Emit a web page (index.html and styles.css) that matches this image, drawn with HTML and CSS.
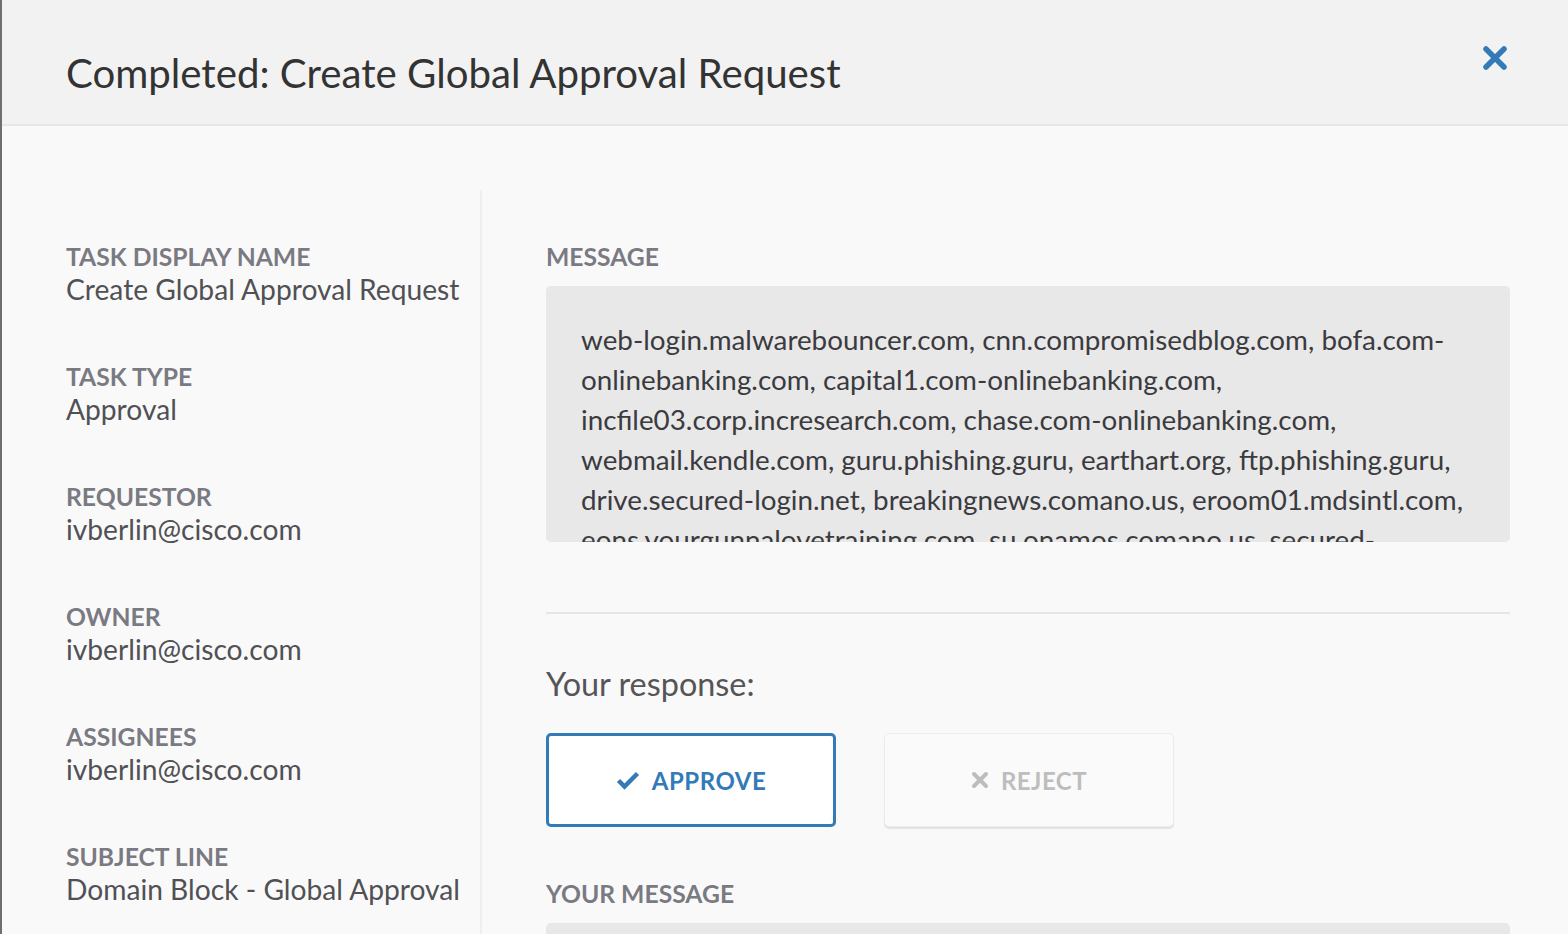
FILE: index.html
```html
<!DOCTYPE html>
<html lang="en">
<head>
<meta charset="utf-8">
<title>Completed: Create Global Approval Request</title>
<link rel="stylesheet" href="styles.css">
</head>
<body>
<div class="page">
  <div class="edge"></div>
  <div class="modal">
    <header class="header">
      <h1 class="title">Completed: Create Global Approval Request</h1>
      <button class="close" aria-label="Close">
        <svg width="26" height="26" viewBox="0 0 26 26"><path d="M4 4 L22 22 M22 4 L4 22" stroke="#337ab7" stroke-width="5.5" stroke-linecap="round"/></svg>
      </button>
    </header>
    <div class="body">
      <aside class="details">
        <div class="field">
          <div class="label">Task Display Name</div>
          <div class="value">Create Global Approval Request</div>
        </div>
        <div class="field">
          <div class="label">Task Type</div>
          <div class="value">Approval</div>
        </div>
        <div class="field">
          <div class="label">Requestor</div>
          <div class="value">ivberlin@cisco.com</div>
        </div>
        <div class="field">
          <div class="label">Owner</div>
          <div class="value">ivberlin@cisco.com</div>
        </div>
        <div class="field">
          <div class="label">Assignees</div>
          <div class="value">ivberlin@cisco.com</div>
        </div>
        <div class="field">
          <div class="label">Subject Line</div>
          <div class="value">Domain Block - Global Approval</div>
        </div>
      </aside>
      <main class="main">
        <div class="label">Message</div>
        <div class="message">web-login.malwarebouncer.com, cnn.compromisedblog.com, bofa.com-onlinebanking.com, capital1.com-onlinebanking.com, incfile03.corp.incresearch.com, chase.com-onlinebanking.com, webmail.kendle.com, guru.phishing.guru, earthart.org, ftp.phishing.guru, drive.secured-login.net, breakingnews.comano.us, eroom01.mdsintl.com, eons.yourgunnalovetraining.com, su.onamos.comano.us, secured-login.net, mail.phishing.guru, login.comano.us</div>
        <hr class="divider">
        <div class="response-title">Your response:</div>
        <div class="buttons">
          <button class="btn btn-approve">
            <svg width="24" height="20" viewBox="0 0 24 20"><path d="M2.5 10.5 L8.5 16.5 L21.5 3.5" fill="none" stroke="#337ab7" stroke-width="4.5" stroke-linejoin="miter"/></svg>
            <span>Approve</span>
          </button>
          <button class="btn btn-reject">
            <svg width="18" height="18" viewBox="0 0 18 18"><path d="M3 3 L15 15 M15 3 L3 15" stroke="#bdbdbd" stroke-width="4" stroke-linecap="round"/></svg>
            <span>Reject</span>
          </button>
        </div>
        <div class="label your-message">Your Message</div>
        <div class="message-input"></div>
      </main>
    </div>
  </div>
</div>
</body>
</html>
```

FILE: styles.css
```css
* { box-sizing: border-box; }
html, body {
  margin: 0;
  height: 100%;
  overflow: hidden;
}
body {
  font-family: Lato, "Open Sans", sans-serif;
  background: #f9f9f9;
  color: #4f4f55;
}
.page {
  display: flex;
  height: 100%;
}
.edge {
  width: 2px;
  flex: none;
  background: #6f6f6f;
}
.modal {
  flex: 1;
  display: flex;
  flex-direction: column;
  min-width: 0;
}
.header {
  height: 126px;
  flex: none;
  background: #f2f2f2;
  border-bottom: 2px solid #e6e6e6;
  display: flex;
  justify-content: space-between;
  align-items: flex-start;
  padding: 0 60px 0 64px;
}
.title {
  margin: 49px 0 0 0;
  font-size: 40.2px;
  line-height: 48px;
  font-weight: 400;
  color: #333333;
}
.close {
  margin-top: 45px;
  background: none;
  border: none;
  padding: 0;
  width: 26px;
  height: 26px;
  cursor: pointer;
}
.body {
  display: flex;
  padding-top: 64px;
  flex: 1;
}
.details {
  width: 480px;
  flex: none;
  padding: 52px 0 0 64px;
  border-right: 2px solid #efefef;
}
.field {
  height: 120px;
}
.label {
  font-size: 24.7px;
  line-height: 30px;
  font-weight: 700;
  text-transform: uppercase;
  color: #7a7a83;
}
.value {
  font-size: 28.2px;
  line-height: 34px;
  color: #505055;
}
.main {
  flex: 1;
  padding: 52px 58px 0 64px;
  min-width: 0;
}
.message {
  margin-top: 14px;
  height: 256px;
  overflow: hidden;
  background: #e8e8e8;
  border-radius: 5px;
  padding: 34px 35px 0 35px;
  font-size: 27.8px;
  line-height: 40px;
  color: #3b3b3f;
}
.divider {
  margin: 70px 0 0 0;
  border: none;
  border-top: 2px solid #e6e6e6;
}
.response-title {
  margin-top: 50px;
  font-size: 32.4px;
  line-height: 40px;
  color: #555558;
}
.buttons {
  display: flex;
  gap: 48px;
  margin-top: 29px;
  align-items: flex-start;
}
.btn {
  width: 290px;
  height: 94px;
  display: flex;
  align-items: center;
  justify-content: center;
  gap: 12px;
  font-family: Lato, sans-serif;
  font-size: 24px;
  font-weight: 700;
  text-transform: uppercase;
  letter-spacing: 0.5px;
  border-radius: 5px;
  cursor: pointer;
}
.btn-approve {
  background: #ffffff;
  border: 3px solid #337ab7;
  color: #337ab7;
}
.btn-reject {
  background: #fafafa;
  border: 1px solid #ececec;
  box-shadow: 0 2px 1px #e2e2e2;
  color: #bdbdbd;
}
.your-message {
  margin-top: 52px;
}
.message-input {
  margin-top: 14px;
  height: 60px;
  background: #e8e8e8;
  border-radius: 5px;
}
```
